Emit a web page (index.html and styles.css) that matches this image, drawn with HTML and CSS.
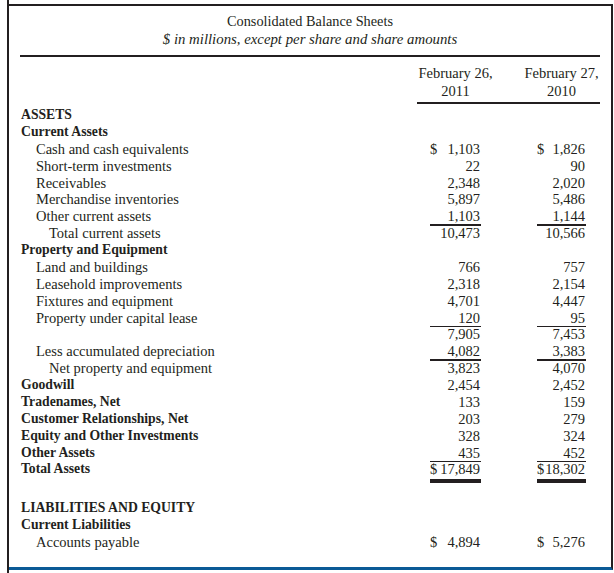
FILE: index.html
```html
<!DOCTYPE html>
<html>
<head>
<meta charset="utf-8">
<link rel="stylesheet" href="styles.css">
</head>
<body>
<div class="page">
  <div class="frame">
    <div class="box">
      <div class="title-block">
        <div class="title">Consolidated Balance Sheets</div>
        <div class="subtitle">$ in millions, except per share and share amounts</div>
      </div>
      <div class="colhead">
        <div class="ch"><span>February 26,</span><span>2011</span></div>
        <div class="ch"><span>February 27,</span><span>2010</span></div>
      </div>
      <div class="rows">
        <div class="row"><div class="lbl b">ASSETS</div></div>
        <div class="row"><div class="lbl b">Current Assets</div></div>
        <div class="row"><div class="lbl l1">Cash and cash equivalents</div><div class="num c1"><span>$</span><span>1,103</span></div><div class="num c2"><span>$</span><span>1,826</span></div></div>
        <div class="row"><div class="lbl l1">Short-term investments</div><div class="num c1"><span></span><span>22</span></div><div class="num c2"><span></span><span>90</span></div></div>
        <div class="row"><div class="lbl l1">Receivables</div><div class="num c1"><span></span><span>2,348</span></div><div class="num c2"><span></span><span>2,020</span></div></div>
        <div class="row"><div class="lbl l1">Merchandise inventories</div><div class="num c1"><span></span><span>5,897</span></div><div class="num c2"><span></span><span>5,486</span></div></div>
        <div class="row"><div class="lbl l1">Other current assets</div><div class="num c1 ul2"><span></span><span>1,103</span></div><div class="num c2 ul2"><span></span><span>1,144</span></div></div>
        <div class="row"><div class="lbl l2">Total current assets</div><div class="num c1"><span></span><span>10,473</span></div><div class="num c2"><span></span><span>10,566</span></div></div>
        <div class="row"><div class="lbl b">Property and Equipment</div></div>
        <div class="row"><div class="lbl l1">Land and buildings</div><div class="num c1"><span></span><span>766</span></div><div class="num c2"><span></span><span>757</span></div></div>
        <div class="row"><div class="lbl l1">Leasehold improvements</div><div class="num c1"><span></span><span>2,318</span></div><div class="num c2"><span></span><span>2,154</span></div></div>
        <div class="row"><div class="lbl l1">Fixtures and equipment</div><div class="num c1"><span></span><span>4,701</span></div><div class="num c2"><span></span><span>4,447</span></div></div>
        <div class="row"><div class="lbl l1">Property under capital lease</div><div class="num c1 ul1"><span></span><span>120</span></div><div class="num c2 ul1"><span></span><span>95</span></div></div>
        <div class="row"><div class="lbl l1"></div><div class="num c1"><span></span><span>7,905</span></div><div class="num c2"><span></span><span>7,453</span></div></div>
        <div class="row"><div class="lbl l1">Less accumulated depreciation</div><div class="num c1 ul2"><span></span><span>4,082</span></div><div class="num c2 ul2"><span></span><span>3,383</span></div></div>
        <div class="row"><div class="lbl l2">Net property and equipment</div><div class="num c1"><span></span><span>3,823</span></div><div class="num c2"><span></span><span>4,070</span></div></div>
        <div class="row"><div class="lbl b">Goodwill</div><div class="num c1"><span></span><span>2,454</span></div><div class="num c2"><span></span><span>2,452</span></div></div>
        <div class="row"><div class="lbl b">Tradenames, Net</div><div class="num c1"><span></span><span>133</span></div><div class="num c2"><span></span><span>159</span></div></div>
        <div class="row"><div class="lbl b">Customer Relationships, Net</div><div class="num c1"><span></span><span>203</span></div><div class="num c2"><span></span><span>279</span></div></div>
        <div class="row"><div class="lbl b">Equity and Other Investments</div><div class="num c1"><span></span><span>328</span></div><div class="num c2"><span></span><span>324</span></div></div>
        <div class="row"><div class="lbl b">Other Assets</div><div class="num c1 ul1"><span></span><span>435</span></div><div class="num c2 ul1"><span></span><span>452</span></div></div>
        <div class="row"><div class="lbl b">Total Assets</div><div class="num c1 ul3"><span>$</span><span>17,849</span></div><div class="num c2 ul3"><span>$</span><span>18,302</span></div></div>
        <div class="spacer"></div>
        <div class="row"><div class="lbl b">LIABILITIES AND EQUITY</div></div>
        <div class="row"><div class="lbl b">Current Liabilities</div></div>
        <div class="row"><div class="lbl l1">Accounts payable</div><div class="num c1"><span>$</span><span>4,894</span></div><div class="num c2"><span>$</span><span>5,276</span></div></div>
      </div>
    </div>
  </div>
</div>
</body>
</html>
```
FILE: styles.css
```css
html, body {
  margin: 0;
  padding: 0;
  background: #ffffff;
}
body {
  font-family: "Liberation Serif", "Times New Roman", serif;
  color: #231f20;
  font-size: 14.5px;
}
.page {
  width: 614px;
  height: 573px;
  box-sizing: border-box;
  padding-left: 7px;
  overflow: hidden;
}
.frame {
  border-left: 2px solid #231f20;
  height: 573px;
  box-sizing: border-box;
  padding-top: 4px;
}
.box {
  width: 604px;
  height: 566px;
  box-sizing: border-box;
  border-top: 2px solid #231f20;
  border-right: 2px solid #231f20;
  border-bottom: 3px solid #0b5a96;
}
.title-block {
  margin: 0 11px 0 11px;
  padding: 6px 0 6.5px;
  border-bottom: 2px solid #231f20;
  text-align: center;
  line-height: 18px;
}
.title {
  font-size: 14.3px;
}
.subtitle {
  font-size: 14.8px;
  font-style: italic;
}
.colhead {
  margin-left: 408px;
  margin-right: 11px;
  padding: 7.8px 14px 2px 13px;
  border-bottom: 2px solid #231f20;
  display: grid;
  grid-template-columns: 51px 56px 49px;
  line-height: 18px;
}
.ch {
  white-space: nowrap;
  display: flex;
  flex-direction: column;
  align-items: center;
}
.ch:nth-child(2) {
  grid-column: 3;
}
.rows {
  padding-top: 2.8px;
}
.row {
  display: grid;
  grid-template-columns: 1fr 51px 56px 49px;
  padding: 0 25px 0 12px;
  height: 16.88px;
  line-height: 16.88px;
}
.spacer {
  height: 22px;
}
.lbl {
  grid-column: 1;
  white-space: nowrap;
}
.b {
  font-weight: bold;
  font-size: 13.7px;
}
.l1 {
  padding-left: 15px;
}
.l2 {
  padding-left: 28px;
}
.num {
  display: flex;
  justify-content: space-between;
  height: 16.88px;
  padding-right: 1px;
}
.c1 {
  grid-column: 2;
}
.c2 {
  grid-column: 4;
}
.ul1 {
  border-bottom: 1px solid #231f20;
}
.ul2 {
  height: 16.1px;
  border-bottom: 2px solid #231f20;
}
.ul3 {
  padding-bottom: 1px;
  border-bottom: 4px solid #231f20;
}
```
